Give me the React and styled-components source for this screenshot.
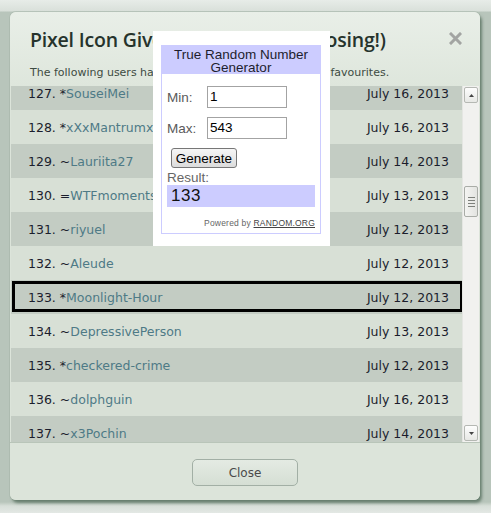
import React from "react";
import styled, { createGlobalStyle } from "styled-components";

const Global = createGlobalStyle`
  html, body { margin: 0; padding: 0; }
  body {
    width: 491px;
    height: 513px;
    overflow: hidden;
    background: linear-gradient(180deg, #e7ece8 0px, #d9e0da 11px, #b8c5bb 12px, #b8c5bb 502px, #d8dfd9 506px, #e3e8e4 513px);
    font-family: "DejaVu Sans", Verdana, sans-serif;
  }
`;

const Page = styled.div`
  position: relative;
  width: 491px;
  height: 513px;
  padding: 12px 0 0 10px;
  box-sizing: border-box;
`;

const Modal = styled.div`
  position: relative;
  width: 470px;
  height: 488px;
  border-radius: 6px;
  background: #dce4da;
  box-shadow: 2px 3px 3px rgba(80, 105, 88, 0.75), 0 0 0 1px rgba(170, 185, 174, 0.6);
  display: flex;
  flex-direction: column;
  overflow: hidden;
`;

const Header = styled.div`
  height: 74px;
  flex: none;
  padding: 0 0 0 20px;
  box-sizing: border-box;
  background: linear-gradient(180deg, #e9efe8 0%, #dee6dc 100%);
  position: relative;
`;

const Title = styled.h1`
  margin: 0;
  padding-top: 16px;
  font-family: "Open Sans", sans-serif;
  font-weight: 600;
  font-size: 19.5px;
  letter-spacing: -0.2px;
  line-height: 24px;
  color: #26332c;
  white-space: nowrap;
`;

const Subtitle = styled.p`
  margin: 14px 0 0;
  font-size: 11px;
  line-height: 14px;
  letter-spacing: 0;
  color: #3d4b42;
  white-space: nowrap;
`;

const CloseX = styled.button`
  position: absolute;
  top: 20px;
  right: 18px;
  width: 13px;
  height: 13px;
  padding: 0;
  border: 0;
  background: none;
  display: flex;
`;

const ListArea = styled.div`
  height: 356px;
  flex: none;
  display: flex;
  margin: 0 1px;
`;

const Rows = styled.div`
  flex: 1;
  overflow: hidden;
`;

const RowsInner = styled.div`
  margin-top: -10px;
`;

const Row = styled.div`
  position: relative;
  height: 34px;
  display: flex;
  align-items: center;
  justify-content: space-between;
  padding: 0 13px 0 17px;
  font-size: 12.5px;
  color: #1b1d2c;
  background: ${(p) => (p.$dark ? "#c3ccc3" : "#d8e0d6")};
  ${(p) =>
    p.$selected &&
    `
    &::after {
      content: "";
      position: absolute;
      left: 1px;
      right: -1px;
      top: 1px;
      bottom: 2px;
      border: 3px solid #000;
    }
  `}
`;

const Name = styled.span`
  color: #4e7a86;
`;

const Scrollbar = styled.div`
  width: 17px;
  flex: none;
  background: #f1f1ef;
  border-left: 1px solid #e4e6e2;
  box-sizing: border-box;
  display: flex;
  flex-direction: column;
  padding: 1px 0;
`;

const ScrollBtn = styled.div`
  height: 16px;
  margin: 0 1px 0 1px;
  border: 1px solid #b5b8b3;
  border-radius: 2px;
  background: linear-gradient(180deg, #fdfdfd, #e7e8e5);
  box-sizing: border-box;
  display: flex;
  align-items: center;
  justify-content: center;
`;

const Track = styled.div`
  flex: 1;
  display: flex;
  flex-direction: column;
  padding-top: 83px;
`;

const Thumb = styled.div`
  height: 31px;
  margin: 0 1px;
  border: 1px solid #a9aca7;
  border-radius: 2px;
  background: linear-gradient(90deg, #f4f4f2, #e3e4e1);
  box-sizing: border-box;
  display: flex;
  flex-direction: column;
  align-items: center;
  justify-content: center;
  gap: 2px;
`;

const Grip = styled.span`
  width: 7px;
  height: 1px;
  background: #7d807b;
`;

const Footer = styled.div`
  flex: 1;
  border-top: 1px solid #b9c5b9;
  display: flex;
  justify-content: center;
  align-items: flex-start;
  padding-top: 16px;
  background: #dce4da;
`;

const Button = styled.button`
  width: 106px;
  height: 27px;
  border: 1px solid #a2afa5;
  border-radius: 5px;
  background: linear-gradient(180deg, #e4ebe3, #d5ded4);
  font-family: "DejaVu Sans", Verdana, sans-serif;
  font-size: 12px;
  color: #4a4a4a;
  padding: 0;
`;

/* Random.org widget */
const Widget = styled.div`
  position: absolute;
  left: 153px;
  top: 31px;
  width: 177px;
  height: 215px;
  background: #fff;
  padding: 14px 9px 12px 8px;
  box-sizing: border-box;
  font-family: "Liberation Sans", Tahoma, Arial, sans-serif;
`;

const WBox = styled.div`
  height: 100%;
  border: 1px solid #ccccff;
  box-sizing: border-box;
  display: flex;
  flex-direction: column;
`;

const WHead = styled.div`
  height: 29px;
  background: #ccccff;
  text-align: center;
  font-size: 13.5px;
  line-height: 13px;
  padding-top: 3px;
  box-sizing: border-box;
  color: #1e1e2e;
  margin: -1px -1px 0;
`;

const WBody = styled.div`
  padding: 12px 5px 0 5px;
  display: flex;
  flex-direction: column;
`;

const Field = styled.div`
  display: flex;
  align-items: center;
  height: 22px;
  margin-bottom: 9px;
`;

const Label = styled.span`
  width: 40px;
  font-size: 13.5px;
  color: #5a5a5a;
`;

const Input = styled.div`
  width: 80px;
  height: 22px;
  box-sizing: border-box;
  border: 1px solid #a3a3a3;
  font-size: 13.5px;
  line-height: 20px;
  padding-left: 2px;
  color: #000;
`;

const GenBtn = styled.button`
  align-self: flex-start;
  margin-left: 4px;
  width: 66px;
  height: 20px;
  border: 1px solid #777;
  border-radius: 3px;
  background: linear-gradient(180deg, #f6f6f6, #dcdcdc);
  font-family: "Liberation Sans", Tahoma, Arial, sans-serif;
  font-size: 13.5px;
  color: #000;
  padding: 0;
`;

const ResultLabel = styled.div`
  font-size: 13.5px;
  line-height: 14px;
  color: #666;
  margin-top: 3px;
`;

const ResultBar = styled.div`
  height: 22px;
  background: #ccccff;
  font-size: 17px;
  line-height: 22px;
  padding-left: 4px;
  color: #111;
  letter-spacing: 0.5px;
`;

const Powered = styled.div`
  text-align: right;
  font-size: 8.5px;
  color: #666;
  margin-top: 11px;
  letter-spacing: 0.2px;
  span {
    color: #444;
    text-decoration: underline;
  }
`;

const rows = [
  ["127.", "*", "SouseiMei", "July 16, 2013"],
  ["128.", "*", "xXxMantrumxXx", "July 16, 2013"],
  ["129.", "~", "Lauriita27", "July 14, 2013"],
  ["130.", "=", "WTFmomentsArt", "July 13, 2013"],
  ["131.", "~", "riyuel", "July 12, 2013"],
  ["132.", "~", "Aleude", "July 12, 2013"],
  ["133.", "*", "Moonlight-Hour", "July 12, 2013"],
  ["134.", "~", "DepressivePerson", "July 13, 2013"],
  ["135.", "*", "checkered-crime", "July 12, 2013"],
  ["136.", "~", "dolphguin", "July 16, 2013"],
  ["137.", "~", "x3Pochin", "July 14, 2013"],
];

export default function App() {
  return (
    <>
      <Global />
      <Page>
        <Modal>
          <Header>
            <Title>Pixel Icon Giveaway Entrants! (closing!)</Title>
            <Subtitle>The following users have added this deviation to their favourites.</Subtitle>
            <CloseX aria-label="Close">
              <svg width="13" height="13" viewBox="0 0 13 13">
                <path d="M2 2 L11 11 M11 2 L2 11" stroke="#a2a4a2" strokeWidth="3" strokeLinecap="square" />
              </svg>
            </CloseX>
          </Header>
          <ListArea>
            <Rows>
              <RowsInner>
                {rows.map(([n, sym, name, date], i) => (
                  <Row key={n} $dark={i % 2 === 0} $selected={n === "133."}>
                    <span>
                      {n} {sym}
                      <Name>{name}</Name>
                    </span>
                    <span>{date}</span>
                  </Row>
                ))}
              </RowsInner>
            </Rows>
            <Scrollbar>
              <ScrollBtn>
                <svg width="5" height="3" viewBox="0 0 5 3"><path d="M0 3 L2.5 0 L5 3 Z" fill="#444" /></svg>
              </ScrollBtn>
              <Track>
                <Thumb>
                  <Grip />
                  <Grip />
                  <Grip />
                  <Grip />
                </Thumb>
              </Track>
              <ScrollBtn>
                <svg width="5" height="3" viewBox="0 0 5 3"><path d="M0 0 L5 0 L2.5 3 Z" fill="#444" /></svg>
              </ScrollBtn>
            </Scrollbar>
          </ListArea>
          <Footer>
            <Button>Close</Button>
          </Footer>
        </Modal>
        <Widget>
          <WBox>
            <WHead>
              True Random Number
              <br />
              Generator
            </WHead>
            <WBody>
              <Field>
                <Label>Min:</Label>
                <Input>1</Input>
              </Field>
              <Field>
                <Label>Max:</Label>
                <Input>543</Input>
              </Field>
              <GenBtn>Generate</GenBtn>
              <ResultLabel>Result:</ResultLabel>
              <ResultBar>133</ResultBar>
              <Powered>
                Powered by <span>RANDOM.ORG</span>
              </Powered>
            </WBody>
          </WBox>
        </Widget>
      </Page>
    </>
  );
}
